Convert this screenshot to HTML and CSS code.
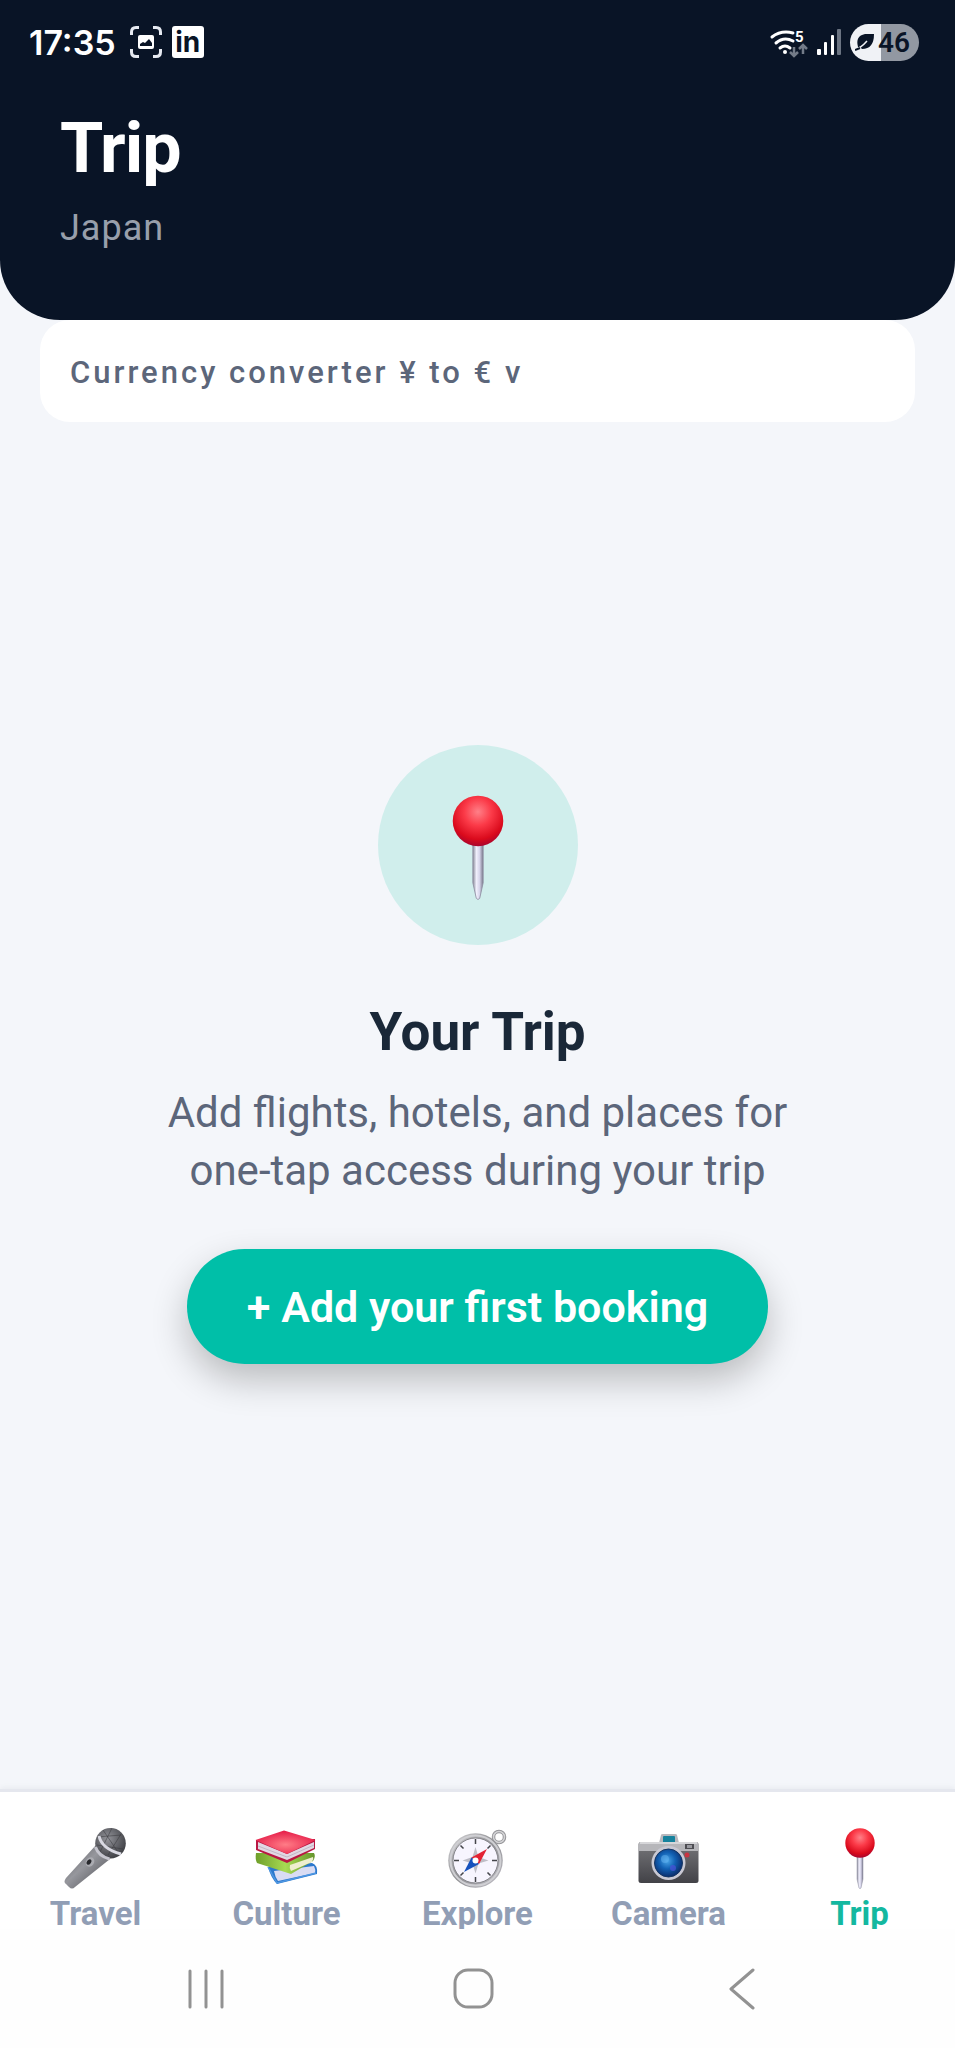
FILE: index.html
```html
<!DOCTYPE html>
<html lang="en">
<head>
    <meta charset="UTF-8" />
    <meta name="viewport" content="width=device-width, initial-scale=1" />
    <title>Trip</title>
    <link rel="stylesheet" href="styles.css">
</head>
<body>

<!-- Shared gradients and the pin icon -->
<svg class="defs" width="0" height="0" aria-hidden="true">
    <defs>
        <radialGradient id="pinRed" cx="50%" cy="32%" r="68%">
            <stop offset="0" stop-color="#ff8088" />
            <stop offset="0.4" stop-color="#fb3a48" />
            <stop offset="0.8" stop-color="#da0a1c" />
            <stop offset="1" stop-color="#a9052d" />
        </radialGradient>
        <linearGradient id="needle">
            <stop offset="0" stop-color="#8a8a9a" />
            <stop offset="0.35" stop-color="#f0effc" />
            <stop offset="0.65" stop-color="#d6d4ea" />
            <stop offset="1" stop-color="#77778a" />
        </linearGradient>
        <linearGradient id="micBody" x1="0" y1="0" x2="1" y2="1">
            <stop offset="0" stop-color="#55565b" />
            <stop offset="0.45" stop-color="#96979d" />
            <stop offset="1" stop-color="#45464b" />
        </linearGradient>
        <radialGradient id="micHead" cx="40%" cy="35%" r="65%">
            <stop offset="0" stop-color="#929399" />
            <stop offset="1" stop-color="#414247" />
        </radialGradient>
        <radialGradient id="bookRed" cx="50%" cy="60%" r="60%">
            <stop offset="0" stop-color="#ff7c86" />
            <stop offset="1" stop-color="#e51a47" />
        </radialGradient>
        <linearGradient id="bookGreen">
            <stop offset="0" stop-color="#6f9f2a" />
            <stop offset="0.5" stop-color="#a7da52" />
            <stop offset="1" stop-color="#65942b" />
        </linearGradient>
        <linearGradient id="metal" x1="0" y1="0" x2="1" y2="1">
            <stop offset="0" stop-color="#d8d8da" />
            <stop offset="0.5" stop-color="#8e8e92" />
            <stop offset="1" stop-color="#c4c2ca" />
        </linearGradient>
        <linearGradient id="cameraBody" x1="0" y1="0" x2="0" y2="1">
            <stop offset="0" stop-color="#77777b" />
            <stop offset="1" stop-color="#424247" />
        </linearGradient>
        <radialGradient id="lens" cx="45%" cy="42%" r="58%">
            <stop offset="0" stop-color="#4aa6e8" />
            <stop offset="0.5" stop-color="#1261b4" />
            <stop offset="1" stop-color="#0b2d6d" />
        </radialGradient>
        <symbol id="pin" viewBox="0 0 64 64">
            <path d="M29 31h6v23l-2 9q-1 1.500-2 0l-2-9z" fill="url(#needle)" stroke="#8f8fa3" stroke-width="0.500" />
            <circle cx="32" cy="18" r="14.700" fill="url(#pinRed)" />
        </symbol>
    </defs>
</svg>

<header class="header">
    <!-- Status bar -->
    <div class="status-bar">
        <div class="status-left">
            <span class="clock">17:35</span>
            <svg width="32" height="32" viewBox="0 0 32 32" aria-hidden="true">
                <path d="M1.500 9V6Q1.500 1.500 6 1.500H9M23 1.500h3Q30.500 1.500 30.500 6v3M30.500 23v3q0 4.500-4.500 4.500h-3M9 30.500H6q-4.500 0-4.500-4.500v-3" fill="none" stroke="#e6eaf1" stroke-width="3" />
                <rect x="8" y="9" width="16" height="14" rx="2" fill="#fff" />
                <path d="M10 20v-2l3-2 2 1 4-4 3 4v3z" fill="#091426" />
            </svg>
            <span class="linkedin">in</span>
        </div>
        <div class="status-right">
            <svg class="wifi" width="38" height="30" viewBox="0 0 38 30" aria-hidden="true">
                <g fill="none" stroke="#fff" stroke-width="3" stroke-linecap="round">
                    <path d="M2 10Q11 3 23 6" />
                    <path d="M6 16Q14 9 23 14" />
                    <path d="M10 21q5-4 10 0" />
                </g>
                <circle cx="15" cy="25" r="2" fill="#fff" />
                <path d="M24 20v8m-4-3l4 4 4-4M33 27v-9m-4 4l4-4 4 4" fill="none" stroke="#737b88" stroke-width="2.500" />
                <text class="wifi-band" x="25" y="15">5</text>
            </svg>
            <svg width="24" height="28" viewBox="0 0 24 28" aria-hidden="true">
                <g fill="#fff">
                    <rect x="0" y="21" width="4" height="6" rx="1" />
                    <rect x="7" y="14" width="3" height="13" rx="1" />
                    <rect x="14" y="7" width="3" height="20" rx="1" />
                    <rect x="20" y="1" width="4" height="26" rx="1" fill="#6b7482" />
                </g>
            </svg>
            <span class="battery">
                <svg width="20" height="18" viewBox="0 0 20 18" aria-hidden="true">
                    <path d="M3 14Q0 3 10 1h9q0 15-12 15l-1-1z" fill="#091426" />
                    <path d="M0 16q5 0 12-8" fill="none" stroke="#f0f2f6" stroke-width="1.500" />
                    <path d="M0 17l5-2" stroke="#091426" stroke-width="2" />
                </svg>
                46
            </span>
        </div>
    </div>
    <h1>Trip</h1>
    <p class="destination">Japan</p>
</header>

<button class="converter" type="button">Currency converter ¥ to € v</button>

<!-- Empty state -->
<main class="empty-state">
    <div class="pin-circle">
        <svg width="110" height="110" aria-hidden="true"><use href="#pin" /></svg>
    </div>
    <h2>Your Trip</h2>
    <p class="hint">Add flights, hotels, and places for one-tap access during your trip</p>
    <button class="add-btn" type="button">+ Add your first booking</button>
</main>

<!-- Tabs -->
<nav class="tab-bar">
    <a href="#travel" class="tab">
        <svg width="64" height="64" viewBox="0 0 64 64" aria-hidden="true">
            <path d="M32 20L46 34L11 62q-3 3-6 0l-3-3q-3-2 0-6z" fill="url(#micBody)" />
            <circle cx="46.500" cy="18.300" r="15.300" fill="url(#micHead)" />
            <path d="M39 5l17 25M33 12l24-2M33 20l26 4M48 3L36 27M57 9L44 30" stroke="#36373b" stroke-width="0.500" />
            <path d="M35 11q3 13 22 18" fill="none" stroke="#d9d9e2" stroke-width="3" />
            <path d="M31.500 22q3 9 14 12" fill="none" stroke="#c5c5ce" stroke-width="3" />
            <ellipse cx="26" cy="37" rx="4" ry="5" fill="#aaabb1" transform="rotate(35 26 37)" />
            <ellipse cx="25" cy="37" rx="2" ry="3" fill="#27282c" transform="rotate(35 25 37)" />
        </svg>
        <span>Travel</span>
    </a>
    <a href="#culture" class="tab">
        <svg width="64" height="64" viewBox="0 0 64 64" aria-hidden="true">
            <path d="M13 42l44-4q6 2 5 11L22 59q-6-6-9-17z" fill="#2b78cd" />
            <path d="M19 46l40-5q2 4 1 7L23 56q-3-4-4-10z" fill="#d9dcf3" />
            <path d="M13 42l9 16 39-10" fill="none" stroke="#4e97e2" stroke-width="1.500" />
            <path d="M1 28h58q2 3-1 8L36 49 2 38q-2-4-1-10z" fill="url(#bookGreen)" />
            <path d="M35 40l23-8q1 2-1 5L36 46q-2-3-1-6z" fill="#efeecf" />
            <path d="M1 15v10l31 13 28-14V14z" fill="#b81843" />
            <path d="M3 17l29 12 27-12v6L32 35 3 24z" fill="#e2d7e3" />
            <path d="M3 21l29 11 27-12" fill="none" stroke="#b9afbd" stroke-width="0.800" />
            <path d="M29 5.500L0.500 15 32 29l28.500-14z" fill="url(#bookRed)" />
        </svg>
        <span>Culture</span>
    </a>
    <a href="#explore" class="tab">
        <svg width="64" height="64" viewBox="0 0 64 64" aria-hidden="true">
            <circle cx="53" cy="12" r="5.500" fill="none" stroke="#949498" stroke-width="3.500" />
            <circle cx="53" cy="12" r="5.500" fill="none" stroke="#d4d4d6" stroke-width="1.500" />
            <circle cx="29.500" cy="35.500" r="27.300" fill="url(#metal)" />
            <circle cx="29.500" cy="35.500" r="25" fill="none" stroke="#cfcfd3" stroke-width="2" />
            <circle cx="29.500" cy="35.500" r="22.500" fill="#f7f5fe" stroke="#88888d" stroke-width="1" />
            <path d="M29.500 14v5M29.500 52v5M8 35.500h5M46 35.500h5M14.500 20.500l3 3M41.500 47.500l3 3M14.500 50.500l3-3M41.500 23.500l3-3" stroke="#44454a" stroke-width="1.500" />
            <path d="M29.500 22l3 10 10 3.500-10 3-3 10-3-10-10-3 10-3.500z" fill="#bebdc6" />
            <path d="M41 24L25.500 32.500 33 39z" fill="#e32334" />
            <path d="M18 47l7.500-14.500L33 39z" fill="#1752bd" />
            <circle cx="29.500" cy="35.500" r="3" fill="#fff" />
        </svg>
        <span>Explore</span>
    </a>
    <a href="#camera" class="tab">
        <svg width="64" height="64" viewBox="0 0 64 64" aria-hidden="true">
            <path d="M22 18l2-8q0-1 2-1h12q2 0 2 1l2 8z" fill="#b8b8bd" />
            <rect x="26" y="11" width="12" height="7" rx="1" fill="#16829d" />
            <rect x="1.500" y="17" width="60" height="41" rx="2.500" fill="url(#cameraBody)" />
            <path d="M1.500 26v-6q0-3 3-3h54q3 0 3 3v6z" fill="#b6b6ba" />
            <path d="M3 18h57" stroke="#e0e0e3" stroke-width="1.500" />
            <rect x="48" y="19" width="9" height="5" fill="#4d4d52" />
            <rect x="50" y="20" width="5" height="3" fill="#99999f" />
            <circle cx="50" cy="30" r="2.500" fill="#c93542" />
            <circle cx="31.500" cy="38" r="17" fill="#c8c8d3" />
            <circle cx="31.500" cy="38" r="14" fill="url(#lens)" stroke="#163663" stroke-width="1" />
            <circle cx="28" cy="34" r="4" fill="#65b4f2" opacity="0.500" />
            <circle cx="36" cy="43" r="3" fill="#4c52d8" opacity="0.700" />
        </svg>
        <span>Camera</span>
    </a>
    <a href="#trip" class="tab active" aria-current="page">
        <svg width="64" height="64" aria-hidden="true"><use href="#pin" /></svg>
        <span>Trip</span>
    </a>
</nav>

<!-- System navigation -->
<div class="system-nav">
    <button type="button" aria-label="Recent apps">
        <svg width="42" height="42" viewBox="0 0 42 42" aria-hidden="true">
            <path d="M5 3v36M21 3v36M37 3v36" />
        </svg>
    </button>
    <button type="button" aria-label="Home">
        <svg width="42" height="42" viewBox="0 0 42 42" aria-hidden="true">
            <rect x="2" y="2" width="37" height="37" rx="13" />
        </svg>
    </button>
    <button type="button" aria-label="Back">
        <svg width="42" height="42" viewBox="0 0 42 42" aria-hidden="true">
            <path d="M31 2L9 21L31 40" />
        </svg>
    </button>
</div>

</body>
</html>
```
FILE: styles.css
```css
* { box-sizing: border-box; margin: 0; padding: 0; }
body {
    font-family: Roboto, "Liberation Sans", sans-serif;
    display: flex;
    flex-direction: column;
    min-height: 100vh;
    background-color: #f4f6fa;
}
button {
    font-family: inherit;
    border: none;
    cursor: pointer;
}
a { text-decoration: none; }
svg { display: block; flex-shrink: 0; }
.defs { position: absolute; }

/* Header */
.header {
    background: #091426;
    color: #fff;
    padding: 0 36px 71px 60px;
    border-radius: 0 0 60px 60px;
}
.status-bar {
    display: flex;
    justify-content: space-between;
    align-items: center;
    height: 84px;
    margin: 0 0 24px -31px;
}
.status-left {
    display: flex;
    align-items: center;
    gap: 10px;
    font-family: Inter, sans-serif;
}
.status-right {
    display: flex;
    align-items: center;
    gap: 9px;
}
.clock {
    margin-right: 4px;
    font-size: 34px;
    font-weight: 600;
}
.linkedin {
    width: 32px;
    height: 32px;
    border-radius: 3px;
    background: #fff;
    color: #091426;
    font-size: 28px;
    font-weight: 700;
    line-height: 32px;
    text-align: center;
}
.wifi { overflow: visible; }
.wifi-band { font-size: 15px; font-weight: 700; fill: #fff; }
.battery {
    display: flex;
    align-items: center;
    gap: 3px;
    height: 37px;
    padding: 0 9px 0 5px;
    border-radius: 19px;
    background: linear-gradient(90deg, #f0f2f6 45%, #9298a2 45%);
    color: #091426;
    font-size: 28px;
    font-weight: 600;
}
h1 {
    font-size: 70px;
    line-height: 80px;
    font-weight: 700;
    letter-spacing: -1px;
}
.destination {
    margin-top: 19px;
    font-size: 36px;
    line-height: 42px;
    letter-spacing: 1px;
    color: #989fab;
}

/* Currency converter */
.converter {
    margin: 0 40px;
    padding: 34px 30px 31px;
    border-radius: 30px;
    background: #fff;
    color: #5c667a;
    font-size: 31px;
    font-weight: 500;
    line-height: 37px;
    letter-spacing: 3px;
    text-align: left;
}

/* Empty state */
.empty-state {
    flex: 1;
    display: flex;
    flex-direction: column;
    align-items: center;
    justify-content: center;
    padding: 0 40px 102px;
    text-align: center;
}
.pin-circle {
    display: flex;
    align-items: center;
    justify-content: center;
    width: 200px;
    height: 200px;
    border-radius: 50%;
    background: #d0eeec;
}
h2 {
    margin-top: 55px;
    font-size: 53px;
    line-height: 64px;
    color: #1a2838;
}
.hint {
    max-width: 640px;
    margin-top: 20px;
    font-size: 42px;
    line-height: 58px;
    color: #5c667a;
}
.add-btn {
    margin-top: 49px;
    padding: 33px 60px 31px;
    border-radius: 60px;
    background: #00bfa8;
    color: #fff;
    font-size: 43px;
    font-weight: 600;
    line-height: 51px;
    box-shadow: 0 16px 36px rgba(0, 0, 0, 0.24);
}

/* Tabs */
.tab-bar {
    display: grid;
    grid-template-columns: repeat(5, 1fr);
    padding-top: 33px;
    border-top: 3px solid #e5e7ee;
    background: #fff;
    box-shadow: 0 -1px 6px rgba(20, 30, 50, 0.06);
}
.tab {
    display: flex;
    flex-direction: column;
    align-items: center;
    gap: 5px;
    color: #919eb5;
    font-size: 33px;
    font-weight: 700;
    line-height: 39px;
}
.tab.active { color: #14b8a0; }

/* System navigation, lies over the bottom edge of the tabs */
.system-nav {
    display: grid;
    grid-template-columns: repeat(3, 1fr);
    align-items: center;
    justify-items: center;
    height: 119px;
    margin-top: -4px;
    padding: 0 78px 0 72px;
    background: #fefefe;
    z-index: 1;
}
.system-nav button { background: none; }
.system-nav svg {
    fill: none;
    stroke: #929292;
    stroke-width: 3px;
    stroke-linecap: round;
    stroke-linejoin: round;
}
```
